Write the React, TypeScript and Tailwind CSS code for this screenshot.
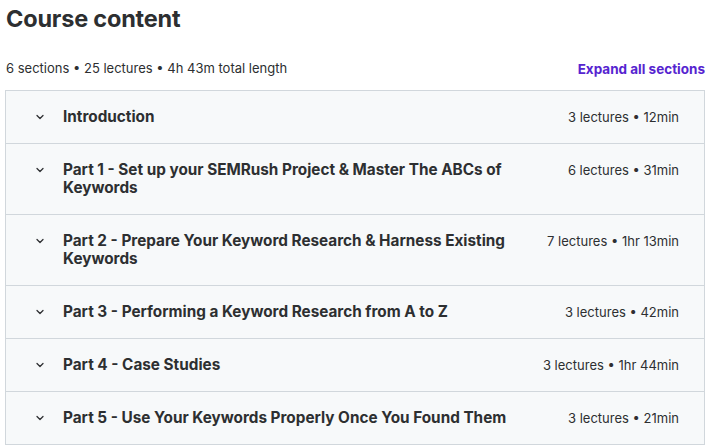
import React from "react";

const sections = [
  { title: "Introduction", meta: "3 lectures • 12min" },
  { title: "Part 1 - Set up your SEMRush Project & Master The ABCs of Keywords", meta: "6 lectures • 31min" },
  { title: "Part 2 - Prepare Your Keyword Research & Harness Existing Keywords", meta: "7 lectures • 1hr 13min" },
  { title: "Part 3 - Performing a Keyword Research from A to Z", meta: "3 lectures • 42min" },
  { title: "Part 4 - Case Studies", meta: "3 lectures • 1hr 44min" },
  { title: "Part 5 - Use Your Keywords Properly Once You Found Them", meta: "3 lectures • 21min" },
];

function Chevron() {
  return (
    <svg width="12" height="12" viewBox="0 0 24 24" fill="none" stroke="#2d2f31" strokeWidth="2.5" strokeLinecap="round" strokeLinejoin="round" className="shrink-0">
      <path d="M6 9l6 6 6-6" />
    </svg>
  );
}

export default function App() {
  return (
    <div className="w-[705px] h-[445px] bg-white overflow-hidden text-[#2d2f31]" style={{ fontFamily: "Inter, 'Noto Sans', sans-serif" }}>
      <h2 className="pl-[6px] pt-[4px] text-[23.5px] font-bold leading-[30px] tracking-[-0.2px]">Course content</h2>
      <div className="flex items-center justify-between pl-[6px] pr-0 mt-[24px] h-[22px]">
        <span className="text-[13px]">6 sections • 25 lectures • 4h 43m total length</span>
        <span className="text-[13.5px] font-bold text-[#5624d0]">Expand all sections</span>
      </div>
      <div className="ml-[5px] mt-[10px] border border-[#d1d7dc] border-b-0">
        {sections.map((s) => (
          <div key={s.title} className="flex items-start justify-between bg-[#f7f9fa] border-b border-[#d1d7dc] pl-[28px] pr-[25px] py-[17px]">
            <div className="flex items-start gap-[17px]">
              <div className="h-[18px] flex items-center"><Chevron /></div>
              <div className="text-[15.3px] font-bold leading-[18px] w-[455px]">{s.title}</div>
            </div>
            <div className="text-[13px] leading-[18px] whitespace-nowrap">{s.meta}</div>
          </div>
        ))}
      </div>
    </div>
  );
}
